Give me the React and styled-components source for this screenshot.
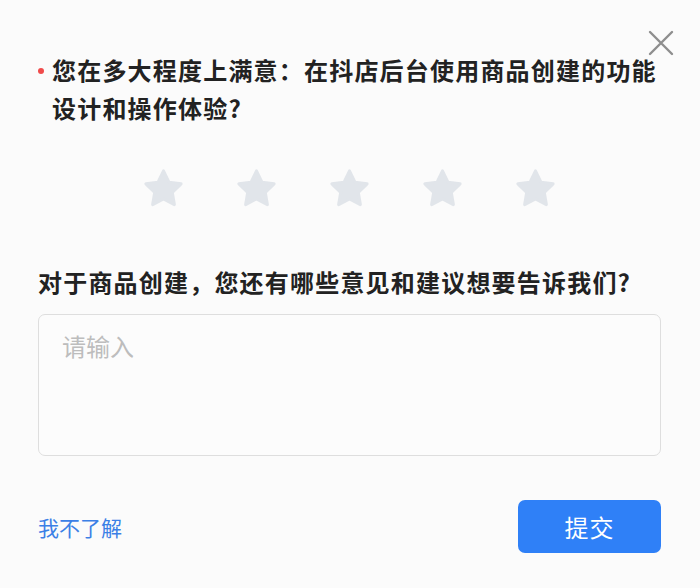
import React from 'react';
import styled, { createGlobalStyle } from 'styled-components';

const GlobalStyle = createGlobalStyle`
  body {
    margin: 0;
    background: #fbfbfb;
    font-family: "Noto Sans CJK SC", "Noto Sans", sans-serif;
  }
`;

const Panel = styled.div`
  position: relative;
  width: 700px;
  height: 588px;
  box-sizing: border-box;
  padding: 51px 39px 0 38px;
  display: flex;
  flex-direction: column;
`;

const CloseButton = styled.button`
  position: absolute;
  top: 29px;
  right: 25px;
  width: 28px;
  height: 28px;
  padding: 0;
  border: none;
  background: transparent;
  cursor: pointer;
`;

const Question = styled.div`
  display: flex;
  align-items: flex-start;
  gap: 8px;
  font-size: 24px;
  line-height: 38px;
  font-weight: 700;
  color: #222;
  letter-spacing: 1.2px;
`;

const Dot = styled.span`
  flex: none;
  width: 6px;
  height: 6px;
  margin-top: 17px;
  border-radius: 50%;
  background: #f04b4b;
`;

const Stars = styled.div`
  display: flex;
  justify-content: center;
  gap: 48px;
  margin-top: 39px;
`;

const Star = styled.svg`
  width: 45px;
  height: 45px;
  color: ${(p) => (p.$active ? '#ffb400' : '#e1e5ea')};
`;

const SubQuestion = styled.div`
  margin-top: 54px;
  font-size: 24px;
  line-height: 34px;
  font-weight: 700;
  color: #222;
  letter-spacing: 1.2px;
`;

const TextArea = styled.textarea`
  margin-top: 15px;
  height: 142px;
  box-sizing: border-box;
  padding: 15px 23px;
  border: 1.5px solid #dedede;
  border-radius: 7px;
  background: #fcfcfc;
  resize: none;
  outline: none;
  font-family: inherit;
  font-size: 24px;
  line-height: 32px;
  color: #222;
  &::placeholder {
    color: #bdbdbd;
  }
`;

const Footer = styled.div`
  margin-top: 44px;
  display: flex;
  align-items: center;
  justify-content: space-between;
`;

const LinkText = styled.a`
  font-size: 21px;
  color: #3b80e6;
  cursor: pointer;
`;

const SubmitButton = styled.button`
  width: 143px;
  height: 53px;
  border: none;
  border-radius: 7px;
  background: #2f80f7;
  color: #fff;
  font-family: inherit;
  font-size: 24px;
  letter-spacing: 1px;
  cursor: pointer;
`;

const StarIcon = () => (
  <Star viewBox="0 0 24 24">
    <polygon
      points="12 2.6 14.9 8.6 21.4 9.5 16.7 14.1 17.8 20.6 12 17.5 6.2 20.6 7.3 14.1 2.6 9.5 9.1 8.6"
      fill="currentColor"
      stroke="currentColor"
      strokeWidth="1.6"
      strokeLinejoin="round"
    />
  </Star>
);

export default function App() {
  return (
    <Panel>
      <GlobalStyle />
      <CloseButton aria-label="关闭">
        <svg width="28" height="28" viewBox="0 0 28 28">
          <path d="M3 3 L25 25 M25 3 L3 25" stroke="#8e8e8e" strokeWidth="2.4" strokeLinecap="round" />
        </svg>
      </CloseButton>
      <Question>
        <Dot />
        <span>您在多大程度上满意：在抖店后台使用商品创建的功能设计和操作体验?</span>
      </Question>
      <Stars>
        {[1, 2, 3, 4, 5].map((n) => (
          <StarIcon key={n} />
        ))}
      </Stars>
      <SubQuestion>对于商品创建，您还有哪些意见和建议想要告诉我们?</SubQuestion>
      <TextArea placeholder="请输入" />
      <Footer>
        <LinkText>我不了解</LinkText>
        <SubmitButton>提交</SubmitButton>
      </Footer>
    </Panel>
  );
}
